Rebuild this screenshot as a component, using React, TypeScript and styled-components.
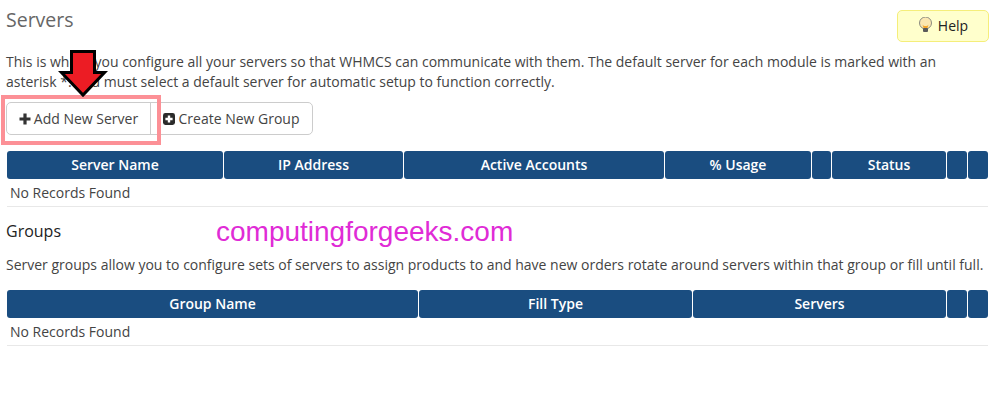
import styled, { createGlobalStyle } from "styled-components";

const GlobalStyle = createGlobalStyle`
  html, body {
    margin: 0;
    padding: 0;
    background: #ffffff;
  }
  body {
    font-family: "Open Sans", "Liberation Sans", sans-serif;
    font-size: 14px;
    color: #444444;
  }
`;

const Page = styled.div`
  position: relative;
  width: 998px;
  height: 410px;
  padding: 10px 9px 0 6px;
  box-sizing: border-box;
  overflow: hidden;
`;

const TitleRow = styled.div`
  display: flex;
  justify-content: space-between;
  align-items: flex-start;
  height: 42px;
`;

const Title = styled.h1`
  margin: -2px 0 0;
  font-size: 19.5px;
  line-height: 24px;
  font-weight: 400;
  color: #666666;
`;

const HelpButton = styled.button`
  display: flex;
  align-items: center;
  justify-content: center;
  gap: 5px;
  width: 92px;
  height: 32px;
  padding: 0 0 2px;
  border: 1px solid #f5ee7a;
  border-radius: 5px;
  background: #ffffcc;
  font: inherit;
  color: #222222;
`;

const Text = styled.p`
  margin: 0;
  font-size: 14px;
  line-height: 20px;
  color: #444444;
`;

const ButtonRow = styled.div`
  display: flex;
  width: fit-content;
  margin-top: 10px;
  border: 1px solid #cccccc;
  border-radius: 5px;
  height: 33px;
  box-sizing: border-box;
`;

const ActionButton = styled.div<{ $width: number; $divider?: boolean }>`
  display: flex;
  align-items: center;
  justify-content: center;
  gap: 3px;
  width: ${(p) => p.$width}px;
  box-sizing: border-box;
  font-size: 14px;
  color: #444444;
  border-right: ${(p) => (p.$divider ? "1px solid #cccccc" : "none")};
`;

const HeadRow = styled.div<{ $columns: string; $top: number }>`
  display: grid;
  grid-template-columns: ${(p) => p.$columns};
  column-gap: 1px;
  margin: ${(p) => p.$top}px 0 0 1px;
`;

const HeadCell = styled.div`
  display: flex;
  align-items: center;
  justify-content: center;
  height: 28px;
  padding-bottom: 2px;
  box-sizing: border-box;
  border-radius: 3px;
  background: #1a4d80;
  color: #ffffff;
  font-size: 14px;
  font-weight: 600;
`;

const EmptyRow = styled.div`
  height: 27px;
  margin: 0 1px;
  padding-left: 3px;
  display: flex;
  align-items: center;
  border-bottom: 1px solid #e8e8e8;
  font-size: 14px;
  color: #444444;
`;

const SubTitle = styled.h2`
  margin: 13px 0 0;
  font-size: 16px;
  line-height: 22px;
  font-weight: 400;
  color: #222222;
`;

const GroupText = styled(Text)`
  margin-top: 13px;
`;

const Watermark = styled.div`
  position: absolute;
  left: 216px;
  top: 216px;
  font-family: "Liberation Sans", Arial, sans-serif;
  font-size: 28px;
  line-height: 32px;
  color: #e02bd6;
`;

const Highlight = styled.div`
  position: absolute;
  left: 1px;
  top: 95px;
  width: 160px;
  height: 50px;
  box-sizing: border-box;
  border: 4px solid #fc9096;
`;

const ArrowIcon = styled.svg`
  position: absolute;
  left: 58px;
  top: 49px;
`;

const BulbIcon = () => (
  <svg width="15" height="16" viewBox="0 0 15 16">
    <circle cx="7.5" cy="6" r="6" fill="#fbe7b0" stroke="#8a8a80" strokeWidth="1" />
    <path d="M4.5 7.5c1 2 5 2 6 0l-1 3.5h-4z" fill="#f4a62a" />
    <rect x="5" y="11" width="5" height="4" rx="1" fill="#5a5a5a" />
  </svg>
);

const PlusIcon = () => (
  <svg width="12" height="12" viewBox="0 0 12 12">
    <path d="M4.4 0.5h3.2v3.9h3.9v3.2H7.6v3.9H4.4V7.6H0.5V4.4h3.9z" fill="#333333" />
  </svg>
);

const PlusSquareIcon = () => (
  <svg width="12" height="12" viewBox="0 0 12 12">
    <rect width="12" height="12" rx="2.4" fill="#2b2b2b" />
    <path d="M4.8 2.4h2.4v2.4h2.4v2.4H7.2v2.4H4.8V7.2H2.4V4.8h2.4z" fill="#ffffff" />
  </svg>
);

const serverColumns = "216px 179px 260px 146px 19px 114px 20px 20px";
const serverHeads = ["Server Name", "IP Address", "Active Accounts", "% Usage", "", "Status", "", ""];
const groupColumns = "411px 273px 253px 20px 20px";
const groupHeads = ["Group Name", "Fill Type", "Servers", "", ""];

const App = () => {
  return (
    <Page>
      <GlobalStyle />
      <TitleRow>
        <Title>Servers</Title>
        <HelpButton>
          <BulbIcon />
          Help
        </HelpButton>
      </TitleRow>
      <Text>
        This is where you configure all your servers so that WHMCS can communicate with them. The default server for
        each module is marked with an asterisk *. You must select a default server for automatic setup to function
        correctly.
      </Text>
      <ButtonRow>
        <ActionButton $width={144} $divider>
          <PlusIcon />
          Add New Server
        </ActionButton>
        <ActionButton $width={161}>
          <PlusSquareIcon />
          Create New Group
        </ActionButton>
      </ButtonRow>
      <HeadRow $columns={serverColumns} $top={16}>
        {serverHeads.map((head, i) => (
          <HeadCell key={i}>{head}</HeadCell>
        ))}
      </HeadRow>
      <EmptyRow>No Records Found</EmptyRow>
      <SubTitle>Groups</SubTitle>
      <GroupText>
        Server groups allow you to configure sets of servers to assign products to and have new orders rotate around
        servers within that group or fill until full.
      </GroupText>
      <HeadRow $columns={groupColumns} $top={15}>
        {groupHeads.map((head, i) => (
          <HeadCell key={i}>{head}</HeadCell>
        ))}
      </HeadRow>
      <EmptyRow>No Records Found</EmptyRow>
      <Watermark>computingforgeeks.com</Watermark>
      <Highlight />
      <ArrowIcon width="50" height="50" viewBox="0 0 50 50">
        <path
          d="M13.5 2.5h23v21h10L25 46 3.5 23.5h10z"
          fill="#ec1c24"
          stroke="#000000"
          strokeWidth="3"
          strokeLinejoin="miter"
        />
      </ArrowIcon>
    </Page>
  );
};

export default App;
